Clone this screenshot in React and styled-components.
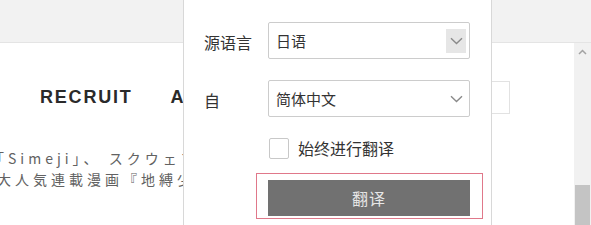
import styled, { createGlobalStyle } from "styled-components";

const GlobalStyle = createGlobalStyle`
  html, body {
    margin: 0;
    padding: 0;
    background: #ffffff;
  }
  body {
    font-family: "Noto Sans CJK SC", "Noto Sans", sans-serif;
  }
`;

const Viewport = styled.div`
  position: relative;
  width: 591px;
  height: 225px;
  overflow: hidden;
  display: flex;
  flex-direction: column;
  background: #ffffff;
`;

const TopBand = styled.div`
  height: 42px;
  flex: none;
  background: #f2f2f2;
  border-bottom: 1px solid #e4e4e4;
`;

const Body = styled.div`
  flex: 1;
  display: flex;
  min-height: 0;
`;

const Page = styled.main`
  flex: 1;
  display: flex;
  flex-direction: column;
  min-width: 0;
`;

const Nav = styled.nav`
  display: flex;
  align-items: center;
  height: 36px;
  margin-top: 36px;
  padding-left: 40px;
`;

const NavItem = styled.span`
  font-family: "Liberation Sans", Arial, sans-serif;
  font-weight: 700;
  font-size: 18px;
  letter-spacing: 1.8px;
  color: #2a2a2a;
  margin-right: ${(p) => p.$gap || 0}px;
`;

const SearchBox = styled.div`
  margin-left: auto;
  width: 110px;
  height: 33px;
  margin-right: 64px;
  border: 1px solid #e2e2e2;
  border-left: none;
  box-sizing: border-box;
`;

const Article = styled.div`
  margin-top: 33px;
  display: flex;
  flex-direction: column;
`;

const TextLine = styled.p`
  margin: 0;
  margin-left: ${(p) => p.$shift}px;
  white-space: nowrap;
  font-family: "Noto Sans CJK JP", sans-serif;
  font-size: 14px;
  line-height: 21px;
  letter-spacing: 4px;
  color: #626262;
`;

const Scrollbar = styled.div`
  width: 17px;
  flex: none;
  background: #f1f1f1;
  display: flex;
  flex-direction: column;
  align-items: center;
`;

const ScrollArrow = styled.div`
  height: 17px;
  display: flex;
  align-items: center;
  justify-content: center;
`;

const ScrollThumb = styled.div`
  margin-top: auto;
  width: 15px;
  height: 40px;
  background: #c4c4c4;
`;

const Panel = styled.section`
  position: absolute;
  left: 183px;
  top: 0;
  width: 309px;
  height: 225px;
  box-sizing: border-box;
  background: #ffffff;
  border-left: 1px solid #d8d8d8;
  border-right: 1px solid #d8d8d8;
  padding: 22px 0 0 20px;
  display: flex;
  flex-direction: column;
`;

const Row = styled.div`
  display: flex;
  align-items: center;
  margin-bottom: ${(p) => p.$mb || 0}px;
`;

const Label = styled.label`
  width: 64px;
  flex: none;
  font-size: 16px;
  color: #333333;
  margin-top: 2px;
  white-space: nowrap;
`;

const Select = styled.div`
  width: 202px;
  height: 37px;
  box-sizing: border-box;
  border: 1px solid #cccccc;
  border-radius: 2px;
  display: flex;
  align-items: center;
  justify-content: space-between;
  padding: 0 3px 0 7px;
  font-size: 15px;
  color: #333333;
`;

const Arrow = styled.span`
  width: 20px;
  height: 24px;
  display: flex;
  align-items: center;
  justify-content: center;
  background: ${(p) => (p.$active ? "#e6e6e6" : "transparent")};
`;

const CheckRow = styled.div`
  display: flex;
  align-items: center;
  margin-left: 65px;
  gap: 9px;
  font-size: 16px;
  color: #333333;
`;

const Box = styled.span`
  width: 20px;
  height: 21px;
  box-sizing: border-box;
  border: 1px solid #c8c8c8;
  border-radius: 2px;
  background: #fff;
`;

const Focus = styled.div`
  margin-top: 13px;
  margin-left: 52px;
  width: 227px;
  height: 46px;
  box-sizing: border-box;
  border: 1px solid #e0788a;
  padding: 6px 11px 1px 11px;
`;

const Button = styled.button`
  display: block;
  width: 202px;
  height: 36px;
  border: none;
  background: #717171;
  color: #e6e6e6;
  font-family: "Noto Sans CJK SC", sans-serif;
  font-size: 16px;
  letter-spacing: 1px;
  padding: 0;
`;

const Chevron = ({ color = "#888" }) => (
  <svg width="13" height="8" viewBox="0 0 13 8">
    <path d="M1 1.2 L6.5 6.5 L12 1.2" fill="none" stroke={color} strokeWidth="1.4" />
  </svg>
);

export default function App() {
  return (
    <>
      <GlobalStyle />
      <Viewport>
        <TopBand />
        <Body>
          <Page>
            <Nav>
              <NavItem $gap={38}>RECRUIT</NavItem>
              <NavItem>A</NavItem>
              <SearchBox />
            </Nav>
            <Article>
              <TextLine $shift={-10}>「Simeji」、 スクウェア・エニックス</TextLine>
              <TextLine $shift={-3}>大人気連載漫画『地縛少年花子くん』</TextLine>
            </Article>
          </Page>
          <Scrollbar>
            <ScrollArrow>
              <svg width="9" height="6" viewBox="0 0 9 6">
                <path d="M1 5 L4.5 1.5 L8 5" fill="none" stroke="#a3a3a3" strokeWidth="1.5" />
              </svg>
            </ScrollArrow>
            <ScrollThumb />
          </Scrollbar>
        </Body>
        <Panel>
          <Row $mb={21}>
            <Label>源语言</Label>
            <Select>
              <span>日语</span>
              <Arrow $active>
                <Chevron color="#8a8a8a" />
              </Arrow>
            </Select>
          </Row>
          <Row $mb={19}>
            <Label>自</Label>
            <Select>
              <span>简体中文</span>
              <Arrow>
                <Chevron color="#8a8a8a" />
              </Arrow>
            </Select>
          </Row>
          <CheckRow>
            <Box />
            <span>始终进行翻译</span>
          </CheckRow>
          <Focus>
            <Button>翻译</Button>
          </Focus>
        </Panel>
      </Viewport>
    </>
  );
}
